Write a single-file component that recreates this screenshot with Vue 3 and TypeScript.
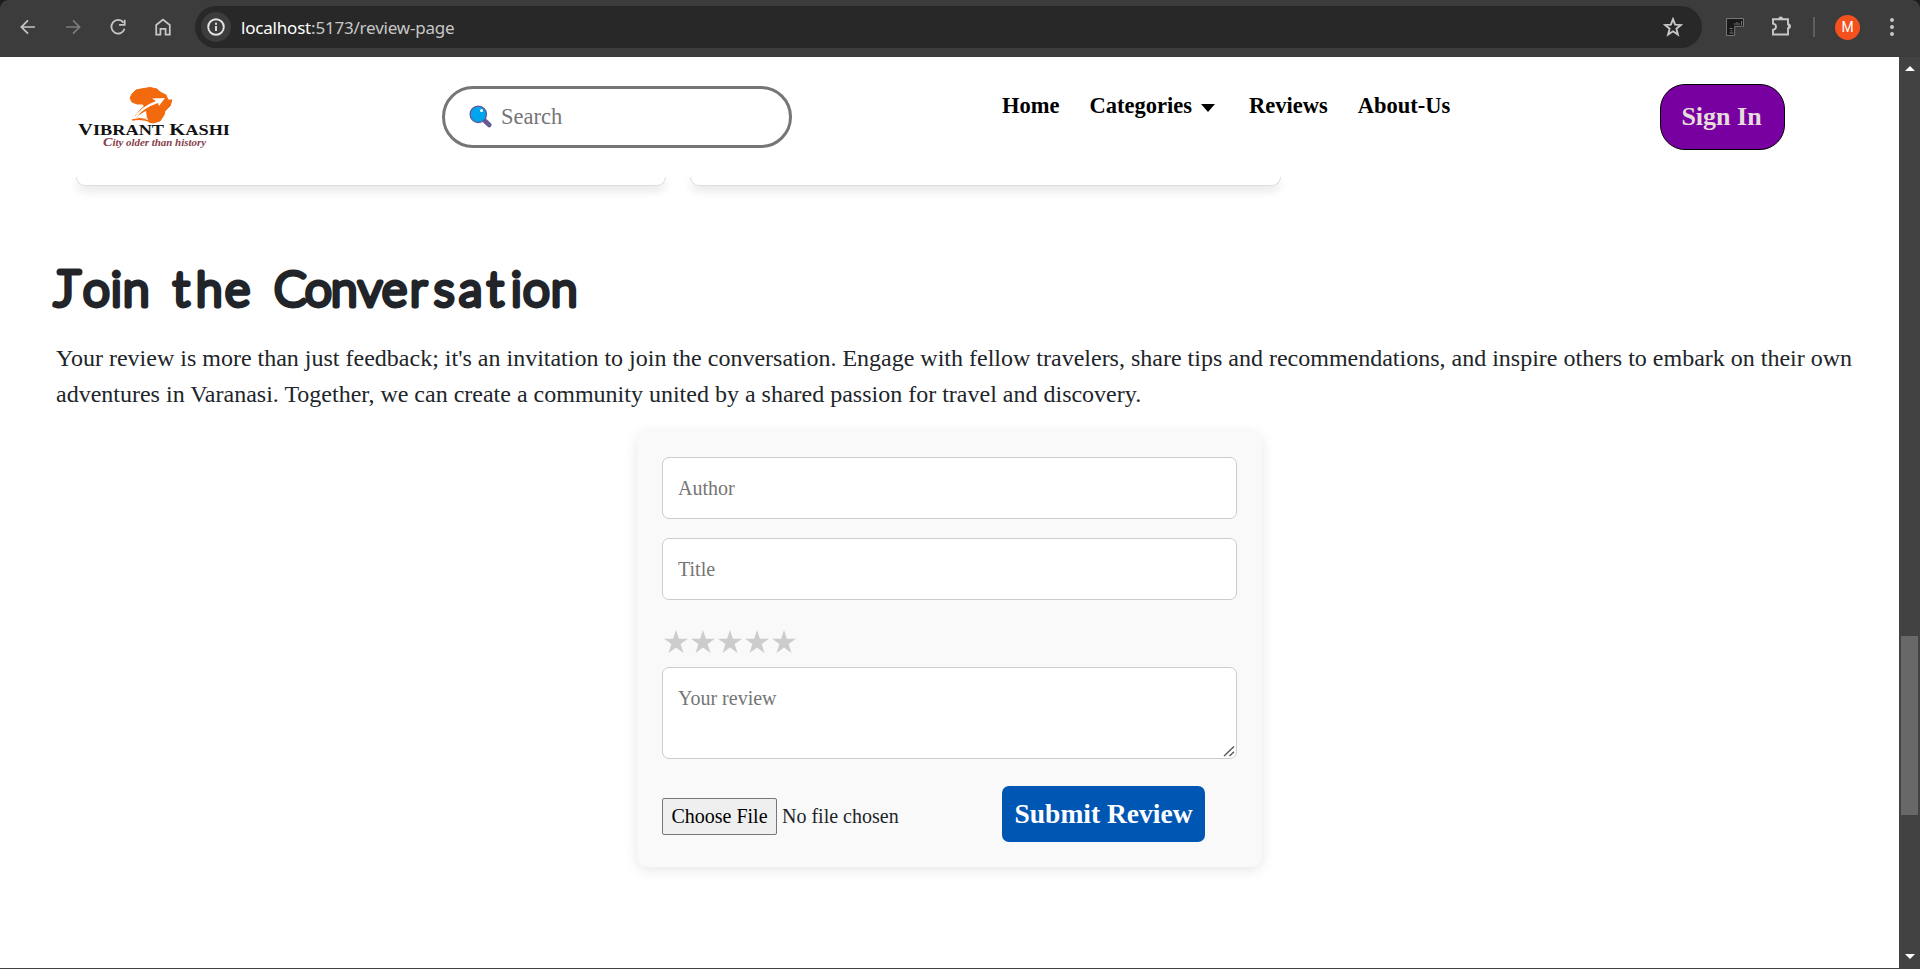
<script setup lang="ts">
import { ref } from 'vue'

interface Letters {
  text: string
  x: string
}

const links: string[] = ['Home', 'Categories', 'Reviews', 'About-Us']
const stars: number[] = [1, 2, 3, 4, 5]
const rating = ref<number>(0)
const author = ref<string>('')
const title = ref<string>('')
const review = ref<string>('')

const headingWords: Letters[] = [
  { text: 'Join', x: '4 33 61 73' },
  { text: 'the', x: '123 146 175' },
  { text: 'Conversation', x: '224 255 281 308 332 360 384 409 437 461 473 501' },
]
</script>

<template>
  <div class="window">
    <header class="chrome">
      <i class="corner left"></i><i class="corner right"></i>
      <div class="nav-icons">
        <svg viewBox="0 0 24 24"><path d="M19.5 12H5M12 4.8 4.8 12 12 19.2" /></svg>
        <svg class="dim" viewBox="0 0 24 24"><path d="M4.5 12H19M12 4.8 19.2 12 12 19.2" /></svg>
        <svg viewBox="0 0 24 24"><path d="M18 7.2A7.4 7.4 0 1 0 19.2 14M19.3 4V9.8H13.2" /></svg>
        <svg viewBox="0 0 24 24"><path d="M4.6 20.3V9.8L12 3.900l7.400 5.900v10.500h-4.600v-6.200H9.200v6.200z" /></svg>
      </div>
      <div class="address">
        <span class="info">
          <svg viewBox="0 0 20 20"><circle cx="10" cy="10" r="7.800" /><path d="M10 9v5M10 5.800v1.900" /></svg>
        </span>
        <span class="url"><b>localhost</b>:5173/review-page</span>
        <svg class="bookmark" viewBox="0 0 20 20"><path d="m10 2.200 2.100 5.500 5.800.3-4.500 3.700 1.500 5.800-4.900-3.200-4.900 3.200 1.500-5.800L2.100 8l5.800-.3z" /></svg>
      </div>
      <div class="tools">
        <svg class="ruler" viewBox="0 0 20 20">
          <path class="body" d="M1.500 1.500h17v7.800H9.700v9.200H1.500z" />
          <path d="M9.800 8V6M12 8V5M14 8V6M16.500 8V4M4.500 11.500h3M5.500 13.800h2M4.500 16h4" />
        </svg>
        <svg class="puzzle" viewBox="0 0 22 22">
          <path d="M3 4.200h15v5.100q2 .2 2 2t-2 2v6.200H3v-4.700q3-.5 3-3.100T3 8.600z" />
          <path class="solid" d="M8.300 4a2.400 2.400 0 0 1 4.800 0zM18 9a2.400 2.400 0 0 1 0 4.800z" />
        </svg>
        <i class="divider"></i>
        <span class="avatar">M</span>
        <svg class="dots" viewBox="0 0 6 20"><circle cx="3" cy="3" r="2" /><circle cx="3" cy="10" r="2" /><circle cx="3" cy="17" r="2" /></svg>
      </div>
    </header>

    <div class="viewport">
      <main class="page">
        <div class="topbar">
          <svg class="logo" viewBox="0 0 160 66" width="160" height="66">
            <path class="land" d="M56 12 58 8 62 4 67 3 73 2 76 1.500 83 3 86 6 92 9 94 14 98 14 96 20 91 25 90 29 86 35 79 37 75 36 73 29 72 24 69 18 63 18 58 16z" />
            <path class="sail" d="M61 30Q66 22 73 18.500V33q-8 2-12-3z" />
            <path class="swoosh" d="M60 32Q66 21 82 15l-4-2.500L91 12l-6 8-1-3Q69 22 63 31z" />
            <path class="gap" d="M62 31.500q6-5 10-6.500l1 8z" />
            <path class="under" d="M58 34q10-2 20 2" />
            <text class="brand" y="49" x="4" textLength="152" lengthAdjust="spacingAndGlyphs">V<tspan class="sc">IBRANT</tspan> K<tspan class="sc">ASHI</tspan></text>
            <text class="tag" x="29" y="60" textLength="103" lengthAdjust="spacingAndGlyphs"><tspan class="cap">C</tspan>ity older than history</text>
          </svg>

          <div class="search">
            <svg viewBox="0 0 24 24">
              <path class="handle" d="m15.500 15.500 4.800 4.500" />
              <circle cx="9.300" cy="9.300" r="8.200" />
              <circle class="shine" cx="12.500" cy="5.600" r="1.500" />
            </svg>
            <input type="text" placeholder="Search" />
          </div>

          <nav class="menu">
            <a v-for="link in links" :key="link">{{ link }}<i v-if="link === 'Categories'" class="caret"></i></a>
          </nav>

          <button class="signin">Sign In</button>
        </div>

        <section class="cards">
          <article></article>
          <article></article>
        </section>

        <h1>
          <svg width="540" height="70" viewBox="0 0 540 70" role="img" aria-label="Join the Conversation">
            <path d="M10 13H29" />
            <text v-for="word in headingWords" :key="word.text" :x="word.x" y="47">{{ word.text }}</text>
          </svg>
        </h1>

        <p class="intro">
          Your review is more than just feedback; it's an invitation to join the conversation. Engage with fellow travelers, share tips and recommendations, and inspire others to embark on their own<br />
          adventures in Varanasi. Together, we can create a community united by a shared passion for travel and discovery.
        </p>

        <form class="review" @submit.prevent>
          <input v-model="author" type="text" placeholder="Author" />
          <input v-model="title" type="text" placeholder="Title" />
          <div class="rating">
            <svg v-for="n in stars" :key="n" :class="{ on: n <= rating }" viewBox="0 0 24 23" @click="rating = n">
              <path d="m12 0 2.900 8.800H24l-7.400 5.300 2.900 8.900-7.500-5.500L4.500 23l2.900-8.900L0 8.800h9.100z" />
            </svg>
          </div>
          <div class="message">
            <textarea v-model="review" placeholder="Your review"></textarea>
            <svg class="grip" viewBox="0 0 12 12"><path d="M1 11 11 1.500M6.500 11 11 6.800" /></svg>
          </div>
          <div class="actions">
            <button type="button" class="choose">Choose File</button>
            <span>No file chosen</span>
            <button type="submit" class="submit">Submit Review</button>
          </div>
        </form>
      </main>

      <aside class="scrollbar">
        <i class="arrow up"></i>
        <i class="thumb"></i>
        <i class="arrow down"></i>
      </aside>
    </div>
  </div>
</template>

<style>
body {
  margin: 0;
  overflow: hidden;
}
</style>

<style scoped>
* {
  box-sizing: border-box;
}
.window {
  width: 1920px;
  height: 969px;
  overflow: hidden;
  display: flex;
  flex-direction: column;
  background: #424242;
  font-family: "Liberation Serif", "Times New Roman", serif;
  color: #212529;
}
input,
textarea,
button {
  font-family: inherit;
  margin: 0;
}

/* browser bar */
.chrome {
  position: relative;
  height: 57px;
  flex: none;
  display: flex;
  align-items: flex-start;
  background: #3c3c3c;
}
.chrome svg {
  fill: none;
  stroke: #c7c7c7;
  stroke-width: 1.9;
  flex: none;
}
.corner {
  position: absolute;
  top: 0;
  width: 8px;
  height: 8px;
}
.corner.left {
  left: 0;
  background: radial-gradient(circle at 100% 100%, #3c3c3c 7.5px, #1c1c1c 8px);
}
.corner.right {
  right: 0;
  background: radial-gradient(circle at 0 100%, #3c3c3c 7.5px, #1c1c1c 8px);
}
.nav-icons {
  display: flex;
  gap: 23px;
  padding: 16px 0 0 17px;
  width: 195px;
}
.nav-icons svg {
  width: 22px;
  height: 22px;
}
.chrome .nav-icons .dim {
  stroke: #7c7c7c;
}
.address {
  margin-top: 6px;
  width: 1507px;
  height: 42px;
  border-radius: 21px;
  background: #282828;
  display: flex;
  align-items: center;
  padding: 0 19px 0 6px;
}
.info {
  width: 30px;
  height: 30px;
  border-radius: 50%;
  background: #3c3c3c;
  display: grid;
  place-items: center;
}
.info svg {
  width: 20px;
  height: 20px;
  stroke: #e3e3e3;
}
.url {
  flex: 1;
  margin: 1px 0 0 10px;
  font: 17px/24px "Noto Sans", sans-serif;
  letter-spacing: -0.2px;
  color: #c7c7c7;
}
.url b {
  font-weight: 400;
  color: #fff;
}
.bookmark {
  width: 20px;
  height: 20px;
}
.tools {
  display: flex;
  align-items: center;
  height: 54px;
}
.chrome .ruler {
  width: 20px;
  height: 20px;
  margin-left: 23px;
  stroke: #777;
  stroke-width: 1;
}
.ruler .body {
  fill: #191919;
}
.puzzle {
  width: 22px;
  height: 22px;
  margin: -2px 0 0 25px;
}
.puzzle .solid {
  fill: #c7c7c7;
  stroke: none;
}
.divider {
  width: 2px;
  height: 20px;
  margin-left: 21px;
  background: #5e5e5e;
}
.avatar {
  width: 25px;
  height: 25px;
  margin-left: 20px;
  border-radius: 50%;
  background: #f4511e;
  color: #fff;
  font: 14px/25px Roboto, sans-serif;
  text-align: center;
}
.dots {
  width: 6px;
  height: 20px;
  margin-left: 29px;
}
.chrome .dots {
  fill: #c7c7c7;
  stroke: none;
}

/* page */
.viewport {
  flex: 1;
  display: flex;
  padding-bottom: 1px;
}
.page {
  width: 1899px;
  background: #fff;
  overflow: hidden;
}
.topbar {
  height: 120px;
  display: flex;
  align-items: flex-start;
}
.logo {
  margin: 29px 0 0 74px;
}
.land,
.sail {
  fill: #f36a0e;
}
.land {
  stroke: #f36a0e;
  stroke-linejoin: round;
}
.swoosh,
.gap {
  fill: #fff;
}
.under {
  fill: none;
  stroke: #f36a0e;
  stroke-width: 1.5;
}
.brand {
  font: bold 17px "Liberation Serif", serif;
  fill: #111;
}
.sc {
  font-size: 15px;
}
.tag {
  font: italic bold 10px "Liberation Serif", serif;
  fill: #86404b;
}
.cap {
  font-size: 13px;
}
.search {
  width: 350px;
  height: 62px;
  margin: 29px 0 0 208px;
  border: 3px solid #767676;
  border-radius: 31px;
  display: flex;
  align-items: center;
  padding-left: 24px;
}
.search svg {
  width: 24px;
  height: 24px;
  flex: none;
}
.search circle {
  fill: #00a6ed;
  stroke: #635994;
  stroke-width: 1.3;
}
.search .shine {
  fill: #fff;
  stroke: none;
}
.search .handle {
  stroke: #635994;
  stroke-width: 4.6;
  stroke-linecap: round;
}
.search input {
  width: 250px;
  margin-left: 8px;
  padding: 0;
  border: 0;
  outline: 0;
  background: none;
  font-size: 22.5px;
}
::placeholder {
  color: #757575;
}
.menu {
  width: 658px;
  margin: 36px 0 0 210px;
  display: flex;
  gap: 30px;
  font-weight: bold;
  font-size: 22.5px;
  line-height: 26px;
  color: #000;
}
.menu a {
  white-space: nowrap;
}
.caret {
  display: inline-block;
  margin: 0 4px 1px 9px;
  border: 7px solid transparent;
  border-top: 8px solid #000;
  border-bottom: 0;
}
.signin {
  width: 125px;
  height: 66px;
  margin-top: 27px;
  padding: 0 2px 0 0;
  border: 1px solid #000;
  border-radius: 25px;
  background: #7800a0;
  color: #e6dcdc;
  font-size: 26px;
  font-weight: bold;
}
.cards {
  height: 40px;
  overflow: hidden;
  display: flex;
  gap: 24px;
  padding-left: 76px;
}
.cards article {
  width: 590px;
  height: 9px;
  border: 1px solid #ddd;
  border-top: 0;
  border-radius: 0 0 9px 9px;
  box-shadow: 0 5px 10px rgba(0, 0, 0, 0.1);
}
.cards article + article {
  width: 591px;
}
h1 {
  height: 70px;
  margin: 42px 0 0 50px;
}
h1 svg {
  display: block;
}
h1 text {
  font: 300 48px Lato, sans-serif;
  fill: #212529;
  stroke: #212529;
  stroke-width: 4.8;
  stroke-linejoin: round;
}
h1 path {
  stroke: #212529;
  stroke-width: 7;
  stroke-linecap: round;
}
.intro {
  margin: 11px 0 0 56px;
  font-size: 24px;
  line-height: 36px;
  white-space: nowrap;
}

/* form */
.review {
  width: 625px;
  height: 435px;
  margin: 20px 0 0 637px;
  padding: 25px;
  background: #f9f9f9;
  border-radius: 10px;
  box-shadow: 0 2.5px 12.5px rgba(0, 0, 0, 0.1);
}
.review > input,
textarea {
  display: block;
  width: 575px;
  height: 62px;
  margin-bottom: 19px;
  padding: 15px;
  border: 1px solid #ccc;
  border-radius: 7px;
  background: #fff;
  font-size: 20px;
}
.rating {
  height: 48px;
  display: flex;
  gap: 3.1px;
  padding: 11px 0 0 2px;
}
.rating svg {
  width: 24px;
  height: 23px;
  fill: #ccc;
}
.rating .on {
  fill: gold;
}
.message {
  position: relative;
}
.review textarea {
  height: 92px;
  margin: 0;
  padding-top: 19px;
  resize: none;
}
.grip {
  position: absolute;
  right: 2px;
  bottom: 2px;
  width: 12px;
  height: 12px;
  fill: none;
  stroke: #555;
  stroke-width: 1.4;
}
.actions {
  display: flex;
  align-items: flex-start;
  padding-top: 27px;
  font-size: 20px;
}
.choose {
  width: 115px;
  height: 37px;
  margin-top: 12px;
  padding: 0;
  border: 1px solid #767676;
  border-radius: 2px;
  background: #efefef;
  color: #000;
  font-size: 20px;
}
.actions span {
  width: 220px;
  margin: 19px 0 0 5px;
  line-height: 23px;
}
.submit {
  width: 203px;
  height: 56px;
  padding: 0;
  border: 0;
  border-radius: 7px;
  background: #0056b3;
  color: #fff;
  font-size: 27.5px;
  font-weight: bold;
}

/* scrollbar */
.scrollbar {
  width: 21px;
  background: #424242;
  display: flex;
  flex-direction: column;
  align-items: center;
}
.arrow {
  border: 5px solid transparent;
}
.up {
  margin-top: 9px;
  border-top: 0;
  border-bottom-color: #fff;
}
.thumb {
  width: 17px;
  height: 179px;
  margin: 565px 0 139px;
  background: #686868;
}
.down {
  border-bottom: 0;
  border-top-color: #fff;
}
</style>
